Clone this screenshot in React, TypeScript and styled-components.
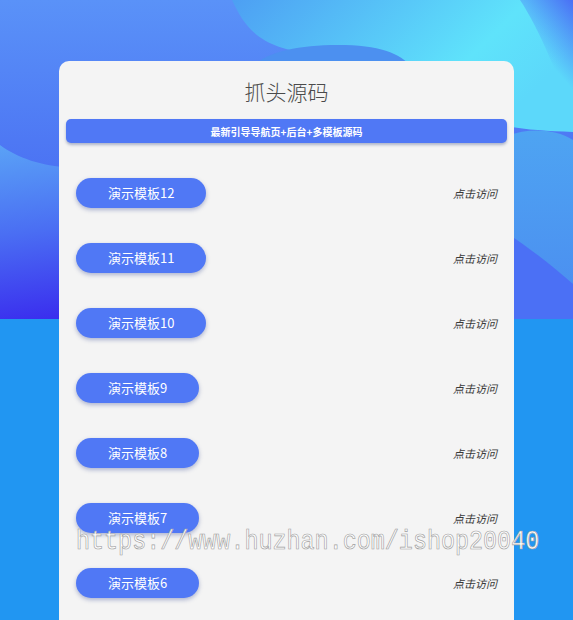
import React from "react";
import styled, { createGlobalStyle } from "styled-components";

const Global = createGlobalStyle`
  html, body { margin: 0; padding: 0; }
  body {
    background: #2196f2;
    font-family: "Noto Sans CJK SC", "Noto Sans", sans-serif;
    overflow: hidden;
  }
`;

const Page = styled.div`
  position: relative;
  width: 573px;
  min-height: 620px;
  background: #2196f2;
  overflow: hidden;
`;

const Hero = styled.svg`
  position: absolute;
  left: 0;
  top: 0;
  width: 573px;
  height: 319px;
  display: block;
  z-index: 0;
`;

const Card = styled.main`
  position: relative;
  z-index: 1;
  margin: 61px 0 0 59px;
  width: 455px;
  min-height: 640px;
  background: #f4f4f4;
  border-radius: 10px 10px 0 0;
  padding: 14px 7px 0;
  box-sizing: border-box;
  display: flex;
  flex-direction: column;
`;

const Title = styled.h1`
  margin: 0;
  text-align: center;
  font-size: 21px;
  line-height: 32px;
  font-weight: 300;
  color: #4a4a4a;
`;

const Banner = styled.div`
  margin-top: 12px;
  height: 24px;
  border-radius: 5px;
  background: #5078f5;
  box-shadow: 0 2px 3px rgba(40, 60, 120, 0.35);
  display: flex;
  align-items: center;
  justify-content: center;
  color: #fff;
  font-size: 10px;
  font-weight: 700;
`;

const List = styled.ul`
  list-style: none;
  margin: 17px 0 0;
  padding: 0 10px;
  display: flex;
  flex-direction: column;
`;

const Row = styled.li`
  height: 65px;
  display: flex;
  align-items: center;
  justify-content: space-between;
`;

const DemoButton = styled.a`
  height: 30px;
  padding: 0 32px;
  border-radius: 15px;
  background: #5078f5;
  box-shadow: 0 2px 4px rgba(40, 60, 140, 0.35);
  color: #fff;
  font-size: 13px;
  display: flex;
  align-items: center;
  text-decoration: none;
`;

const Visit = styled.a`
  font-size: 11px;
  font-style: italic;
  font-weight: 400;
  color: #3a3a3a;
  text-decoration: none;
`;

const Watermark = styled.div`
  position: absolute;
  z-index: 2;
  left: 76px;
  top: 526px;
  font-family: "Liberation Mono", "DejaVu Sans Mono", monospace;
  font-size: 23.4px;
  line-height: 32px;
  color: #ffffff;
  -webkit-text-stroke: 0.6px #a0a0a0;
  white-space: nowrap;
  transform: scaleY(1.2);
  transform-origin: left center;
  pointer-events: none;
`;

const items = [12, 11, 10, 9, 8, 7, 6];

export default function App() {
  return (
    <Page>
      <Global />
      <Hero viewBox="0 0 573 319" preserveAspectRatio="none">
        <defs>
          <linearGradient id="base" x1="0" y1="0" x2="0" y2="1">
            <stop offset="0" stopColor="#5a92f8" />
            <stop offset="0.55" stopColor="#4b72f3" />
            <stop offset="1" stopColor="#4a6cf3" />
          </linearGradient>
          <linearGradient id="cyan" x1="0" y1="0" x2="1" y2="0.4">
            <stop offset="0" stopColor="#4d9ff3" />
            <stop offset="0.75" stopColor="#5fe3fb" />
            <stop offset="1" stopColor="#5cd8fa" />
          </linearGradient>
          <linearGradient id="corner" x1="1" y1="0" x2="0.7" y2="0.6">
            <stop offset="0" stopColor="#4a6ff5" stopOpacity="1" />
            <stop offset="1" stopColor="#4a6ff5" stopOpacity="0" />
          </linearGradient>
          <linearGradient id="leftlow" x1="0" y1="0" x2="0.2" y2="1">
            <stop offset="0" stopColor="#5aa2f6" />
            <stop offset="0.5" stopColor="#4a6ef3" />
            <stop offset="1" stopColor="#3a2eee" />
          </linearGradient>
          <linearGradient id="rightblob" x1="0" y1="0" x2="0" y2="1">
            <stop offset="0" stopColor="#4ea4f2" />
            <stop offset="1" stopColor="#4b8cf0" />
          </linearGradient>
        </defs>
        <rect x="0" y="0" width="573" height="319" fill="url(#base)" />
        <path
          d="M232,0 C246,30 262,50 318,54 C370,58 392,64 420,90 C460,120 500,130 573,132 L573,0 Z"
          fill="url(#cyan)"
        />
        <path d="M520,0 L573,0 L573,120 C560,80 540,30 520,0 Z" fill="url(#corner)" />
        <path d="M250,70 C262,52 300,44 345,45 C385,46 402,55 415,70 Z" fill="#4c90f0" />
        <path
          d="M0,145 C18,158 40,166 75,168 L260,168 L260,319 L0,319 Z"
          fill="url(#leftlow)"
        />
        <path
          d="M500,319 L500,140 C520,128 552,127 573,140 L573,319 Z"
          fill="url(#rightblob)"
        />
        <path
          d="M505,232 C530,248 555,268 573,284 L573,319 L505,319 Z"
          fill="#4b70f5"
        />
      </Hero>
      <Card>
        <Title>抓头源码</Title>
        <Banner>最新引导导航页+后台+多模板源码</Banner>
        <List>
          {items.map((n) => (
            <Row key={n}>
              <DemoButton href="#">演示模板{n}</DemoButton>
              <Visit href="#">点击访问</Visit>
            </Row>
          ))}
        </List>
      </Card>
      <Watermark>https://www.huzhan.com/ishop20040</Watermark>
    </Page>
  );
}
